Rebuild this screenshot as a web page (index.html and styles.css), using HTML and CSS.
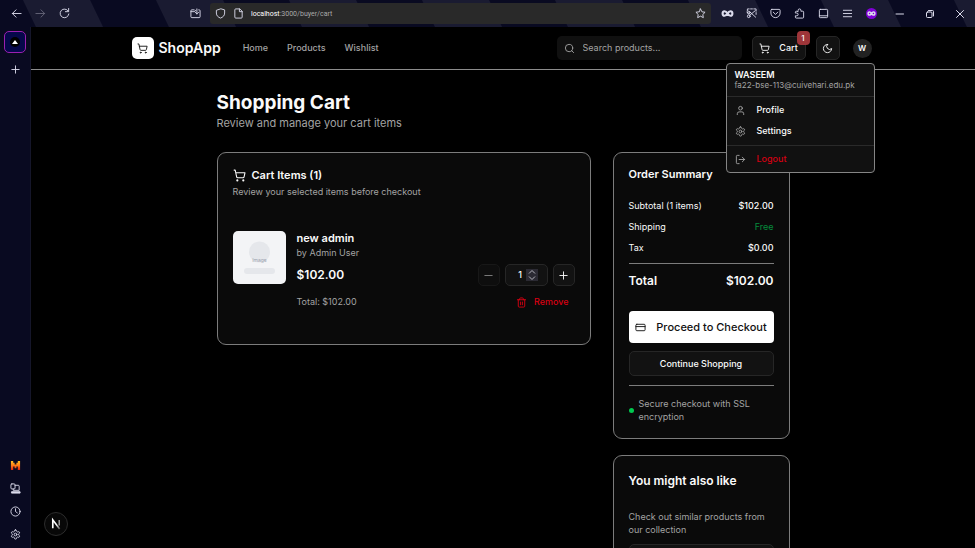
FILE: index.html
```html
<!DOCTYPE html>
<html lang="en">
<head>
<meta charset="utf-8">
<meta name="viewport" content="width=device-width, initial-scale=1">
<title>ShopApp - Shopping Cart</title>
<link rel="stylesheet" href="styles.css">
</head>
<body>
<svg class="defs" aria-hidden="true">
  <symbol id="cart" viewBox="0 0 24 24"><circle cx="8" cy="21" r="1"/><circle cx="19" cy="21" r="1"/><path d="M2.05 2.05h2l2.66 12.42a2 2 0 0 0 2 1.58h9.78a2 2 0 0 0 1.95-1.57l1.65-7.43H5.12"/></symbol>
  <symbol id="gear" viewBox="0 0 24 24"><path d="M12.22 2h-.44a2 2 0 0 0-2 2v.18a2 2 0 0 1-1 1.73l-.43.25a2 2 0 0 1-2 0l-.15-.08a2 2 0 0 0-2.73.73l-.22.38a2 2 0 0 0 .73 2.73l.15.1a2 2 0 0 1 1 1.72v.51a2 2 0 0 1-1 1.74l-.15.09a2 2 0 0 0-.73 2.73l.22.38a2 2 0 0 0 2.73.73l.15-.08a2 2 0 0 1 2 0l.43.25a2 2 0 0 1 1 1.73V20a2 2 0 0 0 2 2h.44a2 2 0 0 0 2-2v-.18a2 2 0 0 1 1-1.73l.43-.25a2 2 0 0 1 2 0l.15.08a2 2 0 0 0 2.73-.73l.22-.39a2 2 0 0 0-.73-2.73l-.15-.08a2 2 0 0 1-1-1.74v-.5a2 2 0 0 1 1-1.74l.15-.09a2 2 0 0 0 .73-2.73l-.22-.38a2 2 0 0 0-2.73-.73l-.15.08a2 2 0 0 1-2 0l-.43-.25a2 2 0 0 1-1-1.73V4a2 2 0 0 0-2-2z"/><circle cx="12" cy="12" r="3"/></symbol>
  <symbol id="infinity" viewBox="0 0 24 24"><path d="M12 12C9 7 3 6 3 12s6 5 9 0 9-6 9 0-6 5-9 0z"/></symbol>
</svg>

<header class="toolbar">
  <svg class="stripes" aria-hidden="true"><defs><pattern id="stripe" width="133" height="27" patternUnits="userSpaceOnUse"><path d="M23 0H90L103 27H36Z" fill="#1a1b31"/></pattern></defs><rect width="100%" height="27" fill="url(#stripe)"/></svg>
  <div class="nav-tools">
    <button class="tool" aria-label="Back"><svg class="icon" viewBox="0 0 24 24"><path d="M22 12H3m8-8-8 8 8 8"/></svg></button>
    <button class="tool dim" aria-label="Forward"><svg class="icon" viewBox="0 0 24 24"><path d="M2 12h19m-8-8 8 8-8 8"/></svg></button>
    <button class="tool" aria-label="Reload"><svg class="icon" viewBox="0 0 24 24"><path d="M20 6.500A9.500 9.500 0 1 0 21.500 13M21 1v7h-7"/></svg></button>
  </div>
  <button class="tool" aria-label="Downloads folder"><svg class="icon" viewBox="0 0 24 24"><path d="M9 4H4a2 2 0 0 0-2 2v13a2 2 0 0 0 2 2h16a2 2 0 0 0 2-2V6a2 2 0 0 0-2-2h-1M2 8h8l2-3M15 2v11m-4-4 4 4 4-4"/></svg></button>
  <div class="address">
    <svg class="icon" viewBox="0 0 24 24"><path d="M12 2 3 5v6c0 6 4 9 9 11 5-2 9-5 9-11V5z"/></svg>
    <svg class="icon" viewBox="0 0 24 24"><path d="M14 2H6a2 2 0 0 0-2 2v16a2 2 0 0 0 2 2h12a2 2 0 0 0 2-2V8zM14 2v6h6"/></svg>
    <span class="url"><b>localhost</b>:3000/buyer/cart</span>
    <button class="star" aria-label="Bookmark"><svg class="icon" viewBox="0 0 24 24"><path d="m12 2 3.100 6.300 6.900 1-5 4.900 1.200 6.800L12 17.800 5.800 21 7 14.200l-5-4.900 6.900-1z"/></svg></button>
  </div>
  <div class="extensions">
    <button class="tool" aria-label="Infinity"><svg class="icon wide" viewBox="0 0 24 24"><use href="#infinity"/></svg></button>
    <button class="tool" aria-label="Screenshot"><svg class="icon" viewBox="0 0 24 24"><path d="M3 6V2h4m3 0h4m3 0h5v5m0 3v4M8 16 20 6M9 9l12 11M2 9l5 3"/><circle cx="6" cy="18" r="3"/><circle cx="6" cy="10" r="3"/></svg></button>
    <button class="tool" aria-label="Pocket"><svg class="icon" viewBox="0 0 24 24"><path d="M4 3h16a2 2 0 0 1 2 2v6a10 10 0 0 1-20 0V5a2 2 0 0 1 2-2zM7 9l5 5 5-5"/></svg></button>
    <button class="tool" aria-label="Extensions"><svg class="icon" viewBox="0 0 24 24"><path d="M9 7V5a3 3 0 0 1 6 0v2h4a2 2 0 0 1 2 2v11a2 2 0 0 1-2 2H5a2 2 0 0 1-2-2v-3h3a3 3 0 0 0 0-6H3V9a2 2 0 0 1 2-2z"/></svg></button>
    <button class="tool" aria-label="Sidebar"><svg class="icon" viewBox="0 0 24 24"><rect x="3" y="3" width="18" height="18" rx="2"/><path d="M3 17h18"/></svg></button>
    <button class="tool" aria-label="Menu"><svg class="icon" viewBox="0 0 24 24"><path d="M3 5h18M3 12h18M3 19h18"/></svg></button>
    <button class="tool" aria-label="Private browsing"><span class="private"><svg class="icon" viewBox="0 0 24 24"><use href="#infinity"/></svg></span></button>
  </div>
  <div class="window-tools">
    <button aria-label="Minimize"><svg class="icon thin" viewBox="0 0 24 24"><path d="M4 12h15"/></svg></button>
    <button aria-label="Restore"><svg class="icon thin" viewBox="0 0 24 24"><rect x="5" y="8" width="11" height="11" rx="2"/><path d="M9 5h8a2 2 0 0 1 2 2v9"/></svg></button>
    <button aria-label="Close"><svg class="icon thin" viewBox="0 0 24 24"><path d="m5 5 14 14M19 5 5 19"/></svg></button>
  </div>
</header>

<div class="browser">
  <aside class="rail">
    <button class="tab" aria-label="ShopApp tab"><svg viewBox="0 0 12 12"><circle cx="6" cy="6" r="5" fill="#000"/><path d="m6 4 3 4H3z" fill="#fff"/></svg></button>
    <button class="rail-button" aria-label="New tab"><svg class="icon" viewBox="0 0 24 24"><path d="M12 4v16M4 12h16"/></svg></button>
    <div class="rail-bottom">
      <button class="rail-button" aria-label="Mistral"><svg class="icon" viewBox="0 0 24 24"><defs><linearGradient id="flame" x2="0" y2="1"><stop stop-color="#ffc524"/><stop offset=".5" stop-color="#ff7b18"/><stop offset="1" stop-color="#dd2010"/></linearGradient></defs><path class="flame" d="M2 2h5v4h3v4h4V6h3V2h5v20h-5v-8h-3v4h-4v-4H7v8H2z"/></svg></button>
      <button class="rail-button" aria-label="Synced devices"><svg class="icon" viewBox="0 0 24 24"><rect x="2" y="2" width="9" height="11" rx="2"/><path d="M11 5h7a2 2 0 0 1 2 2v9H7v-3"/><path d="M4 19h18v3H4z" fill="currentColor"/></svg></button>
      <button class="rail-button" aria-label="History"><svg class="icon" viewBox="0 0 24 24"><circle cx="12" cy="12" r="10"/><path d="M12 6v6l4 3"/></svg></button>
      <button class="rail-button" aria-label="Browser settings"><svg class="icon" viewBox="0 0 24 24"><use href="#gear"/></svg></button>
    </div>
  </aside>

  <div class="page">
    <div class="site-header">
      <div class="site-bar">
        <a class="brand" href="#"><span class="brand-mark"><svg class="icon" viewBox="0 0 24 24"><use href="#cart"/></svg></span>ShopApp</a>
        <nav class="links"><a href="#">Home</a><a href="#">Products</a><a href="#">Wishlist</a></nav>
        <label class="search"><svg class="icon" viewBox="0 0 24 24"><circle cx="11" cy="11" r="8"/><path d="m21 21-4.300-4.300"/></svg><input type="search" placeholder="Search products..." aria-label="Search products"></label>
        <button class="box cart-button"><svg class="icon" viewBox="0 0 24 24"><use href="#cart"/></svg>Cart<span class="badge">1</span></button>
        <button class="box theme" aria-label="Toggle theme"><svg class="icon" viewBox="0 0 24 24"><path d="M12 3a6 6 0 0 0 9 9 9 9 0 1 1-9-9Z"/></svg></button>
        <div class="account">
          <button class="avatar" aria-expanded="true">W</button>
          <div class="menu">
            <div class="who"><strong>WASEEM</strong><span>fa22-bse-113@cuivehari.edu.pk</span></div>
            <div class="menu-group">
              <a href="#"><svg class="icon" viewBox="0 0 24 24"><path d="M19 21v-2a4 4 0 0 0-4-4H9a4 4 0 0 0-4 4v2"/><circle cx="12" cy="7" r="4"/></svg>Profile</a>
              <a href="#"><svg class="icon" viewBox="0 0 24 24"><use href="#gear"/></svg>Settings</a>
            </div>
            <div class="menu-group">
              <button class="logout"><svg class="icon" viewBox="0 0 24 24"><path d="M9 21H5a2 2 0 0 1-2-2V5a2 2 0 0 1 2-2h4M16 17l5-5-5-5M21 12H9"/></svg>Logout</button>
            </div>
          </div>
        </div>
      </div>
    </div>

    <main>
      <h1>Shopping Cart</h1>
      <p class="lead">Review and manage your cart items</p>
      <div class="columns">
        <section class="card items">
          <h2><svg class="icon" viewBox="0 0 24 24"><use href="#cart"/></svg>Cart Items (1)</h2>
          <p class="muted">Review your selected items before checkout</p>
          <article class="item">
            <svg class="thumb" viewBox="0 0 53 53" role="img" aria-label="Product image"><rect width="53" height="53" fill="#f3f4f6"/><circle cx="26.500" cy="21" r="10.500" fill="#e5e7eb"/><rect x="11" y="37" width="31" height="6" rx="3" fill="#e5e7eb"/><text x="26.500" y="31" text-anchor="middle">Image</text></svg>
            <div class="details">
              <h3>new admin</h3>
              <p class="muted">by Admin User</p>
              <div class="price-row">
                <strong class="price">$102.00</strong>
                <div class="quantity">
                  <button class="box step" disabled aria-label="Decrease quantity"><svg class="icon" viewBox="0 0 24 24"><path d="M4 12h16"/></svg></button>
                  <div class="box amount"><input type="text" inputmode="numeric" value="1" aria-label="Quantity"><svg class="spin" viewBox="0 0 12 12"><path d="m3 4.500 3-3 3 3M3 7.500l3 3 3-3"/></svg></div>
                  <button class="box step" aria-label="Increase quantity"><svg class="icon" viewBox="0 0 24 24"><path d="M4 12h16M12 4v16"/></svg></button>
                </div>
              </div>
              <div class="total-row"><span class="muted">Total: $102.00</span><button class="remove"><svg class="icon" viewBox="0 0 24 24"><path d="M3 6h18M19 6v14a2 2 0 0 1-2 2H7a2 2 0 0 1-2-2V6M8 6V4a2 2 0 0 1 2-2h4a2 2 0 0 1 2 2v2M10 11v6M14 11v6"/></svg>Remove</button></div>
            </div>
          </article>
        </section>

        <div class="side">
          <section class="card summary">
            <h2>Order Summary</h2>
            <dl>
              <div><dt>Subtotal (1 items)</dt><dd>$102.00</dd></div>
              <div><dt>Shipping</dt><dd class="free">Free</dd></div>
              <div><dt>Tax</dt><dd>$0.00</dd></div>
              <div class="grand"><dt>Total</dt><dd>$102.00</dd></div>
            </dl>
            <button class="checkout"><svg class="icon" viewBox="0 0 24 24"><rect x="2" y="5" width="20" height="14" rx="2"/><path d="M2 10h20"/></svg>Proceed to Checkout</button>
            <a class="box wide-button" href="#">Continue Shopping</a>
            <p class="secure muted"><span class="dot"></span>Secure checkout with SSL encryption</p>
          </section>
          <section class="card suggestions">
            <h2>You might also like</h2>
            <p class="muted">Check out similar products from our collection</p>
            <a class="box wide-button" href="#" aria-label="Browse products"></a>
          </section>
        </div>
      </div>
    </main>
    <button class="dev" aria-label="Developer tools"><svg viewBox="0 0 24 24"><defs><linearGradient id="fade" x1="0" x2="1" y1="0" y2="1"><stop offset=".5" stop-color="#fff"/><stop offset="1" stop-color="#fff" stop-opacity=".3"/></linearGradient></defs><path d="M8.500 16.500v-9l7.500 10" fill="none" stroke="url(#fade)" stroke-width="1.800"/><path d="M15.500 7.500v6" stroke="#aaa" stroke-width="1.500"/></svg></button>
  </div>
</div>
</body>
</html>
```
FILE: styles.css
```css
* { box-sizing: border-box; }
html, body { height: 100%; }
body {
  margin: 0;
  display: flex;
  flex-direction: column;
  overflow: hidden;
  background: #000;
  color: #fafafa;
  font: 9px/14px Inter, "Liberation Sans", sans-serif;
}
h1, h2, h3, p, dl, dd { margin: 0; }
a { color: inherit; text-decoration: none; }
button, input { font: inherit; color: inherit; }
button { border: 0; padding: 0; background: none; }
.defs { position: absolute; width: 0; height: 0; }
.icon {
  width: 11px;
  height: 11px;
  flex: none;
  fill: none;
  stroke: currentColor;
  stroke-width: 2;
  stroke-linecap: round;
  stroke-linejoin: round;
}

/* Browser frame */
.toolbar {
  position: relative;
  flex: none;
  display: flex;
  align-items: center;
  height: 27px;
  background: #090a21;
  color: #dcdcec;
}
.stripes { position: absolute; inset: 0; width: 100%; height: 100%; }
.toolbar > :not(.stripes) { position: relative; }
.nav-tools { display: flex; margin: 0 107px 0 4px; }
.tool, .window-tools button {
  display: flex;
  align-items: center;
  justify-content: center;
  width: 24px;
  height: 24px;
}
.dim { color: #666678; }
.wide { width: 13px; height: 13px; stroke-width: 4; }
.address {
  flex: 1;
  display: flex;
  align-items: center;
  gap: 7px;
  height: 21px;
  margin: 0 4px 0 3px;
  padding: 0 5px;
  border-radius: 3px;
  background: #292929;
}
.url { flex: 1; color: #aaa; font: 7px/10px Roboto, sans-serif; }
.url b { color: #fff; font-weight: 400; }
.star { display: flex; }
.extensions, .window-tools { display: flex; }
.extensions { margin-right: 2px; }
.window-tools button { width: 30px; }
.thin { width: 12px; height: 12px; }
.private {
  display: flex;
  align-items: center;
  justify-content: center;
  width: 11px;
  height: 11px;
  border-radius: 50%;
  background: #8000d7;
}
.private .icon { width: 9px; height: 9px; stroke-width: 4; }
.browser { flex: 1; min-height: 0; display: flex; }
.rail {
  flex: none;
  display: flex;
  flex-direction: column;
  align-items: center;
  gap: 5px;
  width: 31px;
  padding: 4px 0 2px;
  border-right: 1px solid #15162a;
  background: #090a21;
  color: #dcdcec;
}
.tab {
  display: flex;
  align-items: center;
  justify-content: center;
  width: 22px;
  height: 22px;
  border: 1px solid #9b1fb0;
  border-radius: 5px;
  background: #06084a;
}
.tab svg { width: 12px; height: 12px; }
.rail-button {
  display: flex;
  align-items: center;
  justify-content: center;
  width: 23px;
  height: 23px;
}
.rail-bottom { margin-top: auto; }
.flame { fill: url(#flame); stroke: none; }

/* Site header */
.page { position: relative; flex: 1; min-width: 0; overflow: hidden; }
.site-header { border-bottom: 1px solid #8c8c8c; }
.site-bar {
  display: flex;
  align-items: center;
  max-width: 743px;
  height: 42px;
  margin: 0 auto;
}
.brand {
  display: flex;
  align-items: center;
  gap: 5px;
  font-size: 14px;
  font-weight: 600;
}
.brand-mark {
  display: flex;
  align-items: center;
  justify-content: center;
  width: 22px;
  height: 22px;
  border-radius: 5px;
  background: #fff;
  color: #111;
}
.links {
  flex: 1;
  display: flex;
  gap: 19px;
  margin-left: 22px;
  color: #a3a3a3;
  font-weight: 500;
}
.search {
  display: flex;
  align-items: center;
  gap: 8px;
  width: 185px;
  height: 24px;
  margin-right: 10px;
  padding: 0 7px;
  border-radius: 5px;
  background: #101010;
  color: #a3a3a3;
}
.search input {
  flex: 1;
  min-width: 0;
  border: 0;
  padding: 0;
  background: none;
  outline: 0;
}
.search input::placeholder { color: #a3a3a3; }
.box {
  display: flex;
  align-items: center;
  justify-content: center;
  border: 1px solid #262626;
  border-radius: 5px;
  background: #121212;
  font-weight: 500;
}
.cart-button {
  position: relative;
  gap: 9px;
  width: 54px;
  height: 24px;
  margin-right: 10px;
}
.badge {
  position: absolute;
  top: -6px;
  right: -5px;
  width: 13px;
  height: 14px;
  border-radius: 4px;
  background: #9e3539;
  font-size: 8px;
}
.theme { width: 24px; height: 24px; margin-right: 13px; }
.account { position: relative; margin-right: 3px; }
.avatar {
  display: block;
  width: 19px;
  height: 19px;
  border-radius: 50%;
  background: #222;
  font-size: 8px;
  font-weight: 600;
}
.menu {
  position: absolute;
  z-index: 2;
  top: 24px;
  right: -3px;
  width: 149px;
  border: 1px solid #858585;
  border-radius: 4px;
  background: #111;
}
.who { display: flex; flex-direction: column; padding: 5px 8px; line-height: 11px; }
.who strong { font-weight: 600; }
.who span { color: #a3a3a3; font-size: 8px; }
.menu-group { padding: 3px 8px; border-top: 1px solid #2a2a2a; font-weight: 500; }
.menu-group + .menu-group { padding-bottom: 2px; }
.menu-group a, .logout {
  display: flex;
  align-items: center;
  gap: 11px;
  height: 21px;
}
.menu-group .icon { color: #a3a3a3; }
.logout { color: #d40012; }

/* Cart */
main { max-width: 573px; margin: 0 auto; padding-top: 21px; }
h1 { font-size: 19px; line-height: 24px; font-weight: 700; }
.lead { color: #a3a3a3; font-size: 11px; line-height: 16px; }
.muted { color: #a3a3a3; }
.columns {
  display: grid;
  grid-template-columns: minmax(0, 1fr) 177px;
  align-items: start;
  gap: 22px;
  margin-top: 21px;
}
.card {
  padding: 15px;
  border: 1px solid #7c7c7c;
  border-radius: 9px;
  background: #0a0a0a;
}
.card h2 {
  display: flex;
  align-items: center;
  gap: 6px;
  font-size: 11px;
  line-height: 14px;
  font-weight: 600;
}
.items { padding-bottom: 35px; }
.items h2 .icon { width: 13px; height: 13px; }
.items h2 + .muted { margin-top: 3px; }
.item { display: flex; gap: 11px; margin-top: 32px; }
.thumb { flex: none; width: 53px; height: 53px; border-radius: 5px; }
.thumb text { fill: #9ca3af; font-size: 5px; }
.details { flex: 1; }
h3 { font-size: 11px; line-height: 15px; font-weight: 600; }
.price-row, .total-row { display: flex; align-items: center; justify-content: space-between; }
.price-row { margin-top: 4px; }
.price { font-size: 12px; font-weight: 600; }
.quantity { display: flex; gap: 5px; }
.step, .amount { width: 22px; height: 22px; }
.step:disabled { opacity: .5; }
.amount { width: 43px; gap: 4px; }
.amount input { width: 8px; border: 0; padding: 0; background: none; text-align: right; }
.spin {
  width: 12px;
  height: 12px;
  background: #2b2a33;
  fill: none;
  stroke: #b5b5bd;
}
.total-row { margin-top: 9px; }
.remove {
  display: flex;
  align-items: center;
  gap: 7px;
  margin-right: 6px;
  color: #d90012;
  font-weight: 500;
}
.side { display: grid; gap: 16px; }
.summary { padding-top: 14px; }
.summary dl { margin-top: 18px; }
.summary dl div { display: flex; justify-content: space-between; margin-bottom: 7px; }
.summary dl .grand {
  margin: 8px 0 22px;
  padding-top: 9px;
  border-top: 1px solid #7c7c7c;
  font-size: 12px;
  line-height: 16px;
  font-weight: 600;
}
.summary dd { font-weight: 500; }
.summary .grand dd { font-weight: 600; }
.summary .free { color: #058c3c; font-weight: 400; }
.checkout {
  display: flex;
  align-items: center;
  justify-content: center;
  gap: 10px;
  width: 100%;
  height: 32px;
  border-radius: 4px;
  background: #fff;
  color: #111;
  font-size: 11px;
  font-weight: 500;
}
.wide-button { height: 25px; margin-top: 8px; }
.secure {
  display: flex;
  align-items: center;
  gap: 5px;
  margin-top: 9px;
  padding-top: 11px;
  border-top: 1px solid #7c7c7c;
  line-height: 13px;
}
.dot { flex: none; width: 5px; height: 5px; border-radius: 50%; background: #00c950; }
.suggestions h2 { margin-top: 3px; font-size: 12px; }
.suggestions .muted { margin-top: 22px; line-height: 13px; }
.dev {
  position: absolute;
  left: 13px;
  bottom: 12px;
  width: 24px;
  height: 24px;
  border: 1px solid #2c2c2c;
  border-radius: 50%;
  background: #080808;
}
.dev svg { display: block; width: 22px; height: 22px; }
```
